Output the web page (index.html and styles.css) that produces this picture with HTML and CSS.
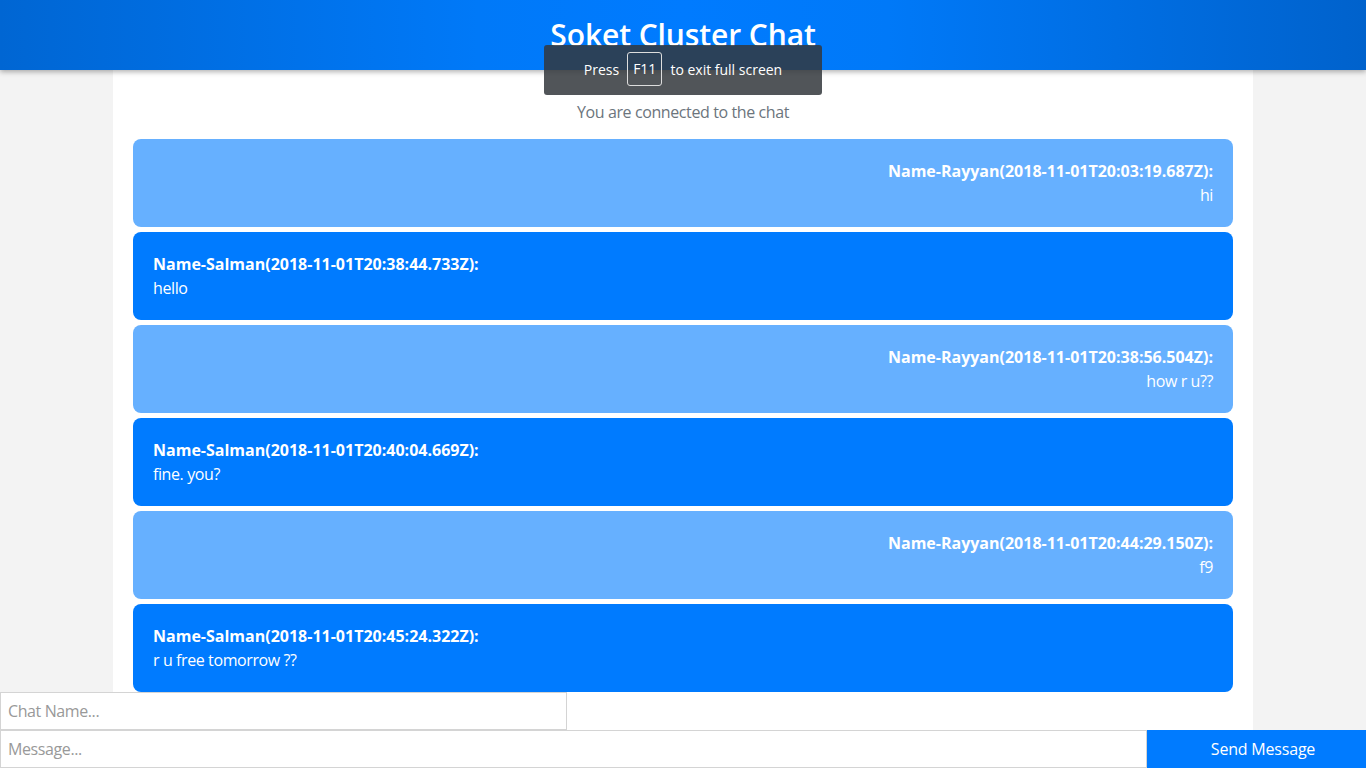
FILE: index.html
```html
<!DOCTYPE html>
<html lang="en">
<head>
<meta charset="utf-8">
<title>Soket Cluster Chat</title>
<link rel="stylesheet" href="styles.css">
</head>
<body>
<header class="topbar">
  <h1 class="title">Soket Cluster Chat</h1>
</header>
<main class="page">
  <section class="container">
    <p class="status">You are connected to the chat</p>
    <ul class="messages">
      <li class="msg msg-other"><strong>Name-Rayyan(2018-11-01T20:03:19.687Z):</strong><span>hi</span></li>
      <li class="msg msg-self"><strong>Name-Salman(2018-11-01T20:38:44.733Z):</strong><span>hello</span></li>
      <li class="msg msg-other"><strong>Name-Rayyan(2018-11-01T20:38:56.504Z):</strong><span>how r u??</span></li>
      <li class="msg msg-self"><strong>Name-Salman(2018-11-01T20:40:04.669Z):</strong><span>fine. you?</span></li>
      <li class="msg msg-other"><strong>Name-Rayyan(2018-11-01T20:44:29.150Z):</strong><span>f9</span></li>
      <li class="msg msg-self"><strong>Name-Salman(2018-11-01T20:45:24.322Z):</strong><span>r u free tomorrow ??</span></li>
    </ul>
  </section>
</main>
<form class="composer">
  <input class="field field-name" type="text" placeholder="Chat Name...">
  <div class="row">
    <input class="field field-msg" type="text" placeholder="Message...">
    <button class="send" type="button">Send Message</button>
  </div>
</form>
<div class="fs-toast">Press <span class="key">F11</span> to exit full screen</div>
</body>
</html>
```
FILE: styles.css
```css
* { box-sizing: border-box; }
html, body { margin: 0; padding: 0; height: 100%; }
body {
  font-family: "Open Sans", "Noto Sans", sans-serif;
  font-size: 16px;
  background: #f3f3f3;
  overflow: hidden;
  display: flex;
  flex-direction: column;
}
.topbar {
  height: 70px;
  flex: none;
  background: linear-gradient(to right, #0066d3 0%, #0079f8 35%, #007bff 50%, #0079f8 65%, #0062cc 100%);
  box-shadow: 0 2px 5px rgba(0,0,0,0.3);
  display: flex;
  justify-content: center;
  position: relative;
  z-index: 2;
}
.title {
  margin: 13px 0 0;
  color: #fff;
  font-size: 30px;
  font-weight: 600;
  line-height: 44px;
  letter-spacing: -0.1px;
}
.page {
  flex: 1;
  display: flex;
  justify-content: center;
  min-height: 0;
}
.container {
  width: 1140px;
  background: #fff;
  padding: 0 20px;
}
.status {
  margin: 30px 0 15px;
  text-align: center;
  color: #6c757d;
  line-height: 24px;
  letter-spacing: -0.4px;
}
.messages {
  list-style: none;
  margin: 0;
  padding: 0;
  display: flex;
  flex-direction: column;
  gap: 5px;
}
.msg {
  padding: 20px;
  border-radius: 8px;
  color: #fff;
  line-height: 24px;
  display: flex;
  flex-direction: column;
  letter-spacing: -0.4px;
}
.msg strong { font-weight: 700; letter-spacing: 0; }
.msg-other { background: #66b0ff; align-items: flex-end; }
.msg-self { background: #007bff; align-items: flex-start; }
.composer {
  position: fixed;
  left: 0;
  right: 0;
  bottom: 0;
  margin: 0;
  display: flex;
  flex-direction: column;
}
.field {
  height: 38px;
  border: 1px solid #d4d4d4;
  background: #fff;
  font: inherit;
  font-size: 16px;
  padding: 0 7px;
  outline: none;
  letter-spacing: -0.4px;
}
.field::placeholder { color: #999; }
.field-name { width: 567px; }
.row { display: flex; }
.field-msg { flex: 1; }
.send {
  width: 219px;
  height: 38px;
  border: none;
  background: #007bff;
  color: #fff;
  font: inherit;
  font-size: 16px;
  letter-spacing: -0.2px;
  padding: 0 0 0 13px;
}
.fs-toast {
  position: absolute;
  left: 544px;
  top: 45px;
  width: 278px;
  height: 50px;
  background: rgba(50, 55, 60, 0.85);
  border-radius: 3px;
  color: #fff;
  font-size: 14px;
  display: flex;
  align-items: center;
  justify-content: center;
  gap: 8px;
  z-index: 5;
  letter-spacing: 0;
  padding-bottom: 2px;
}
.key {
  border: 1px solid #ddd;
  border-radius: 3px;
  padding: 6px 5px;
  line-height: 20px;
}
```
